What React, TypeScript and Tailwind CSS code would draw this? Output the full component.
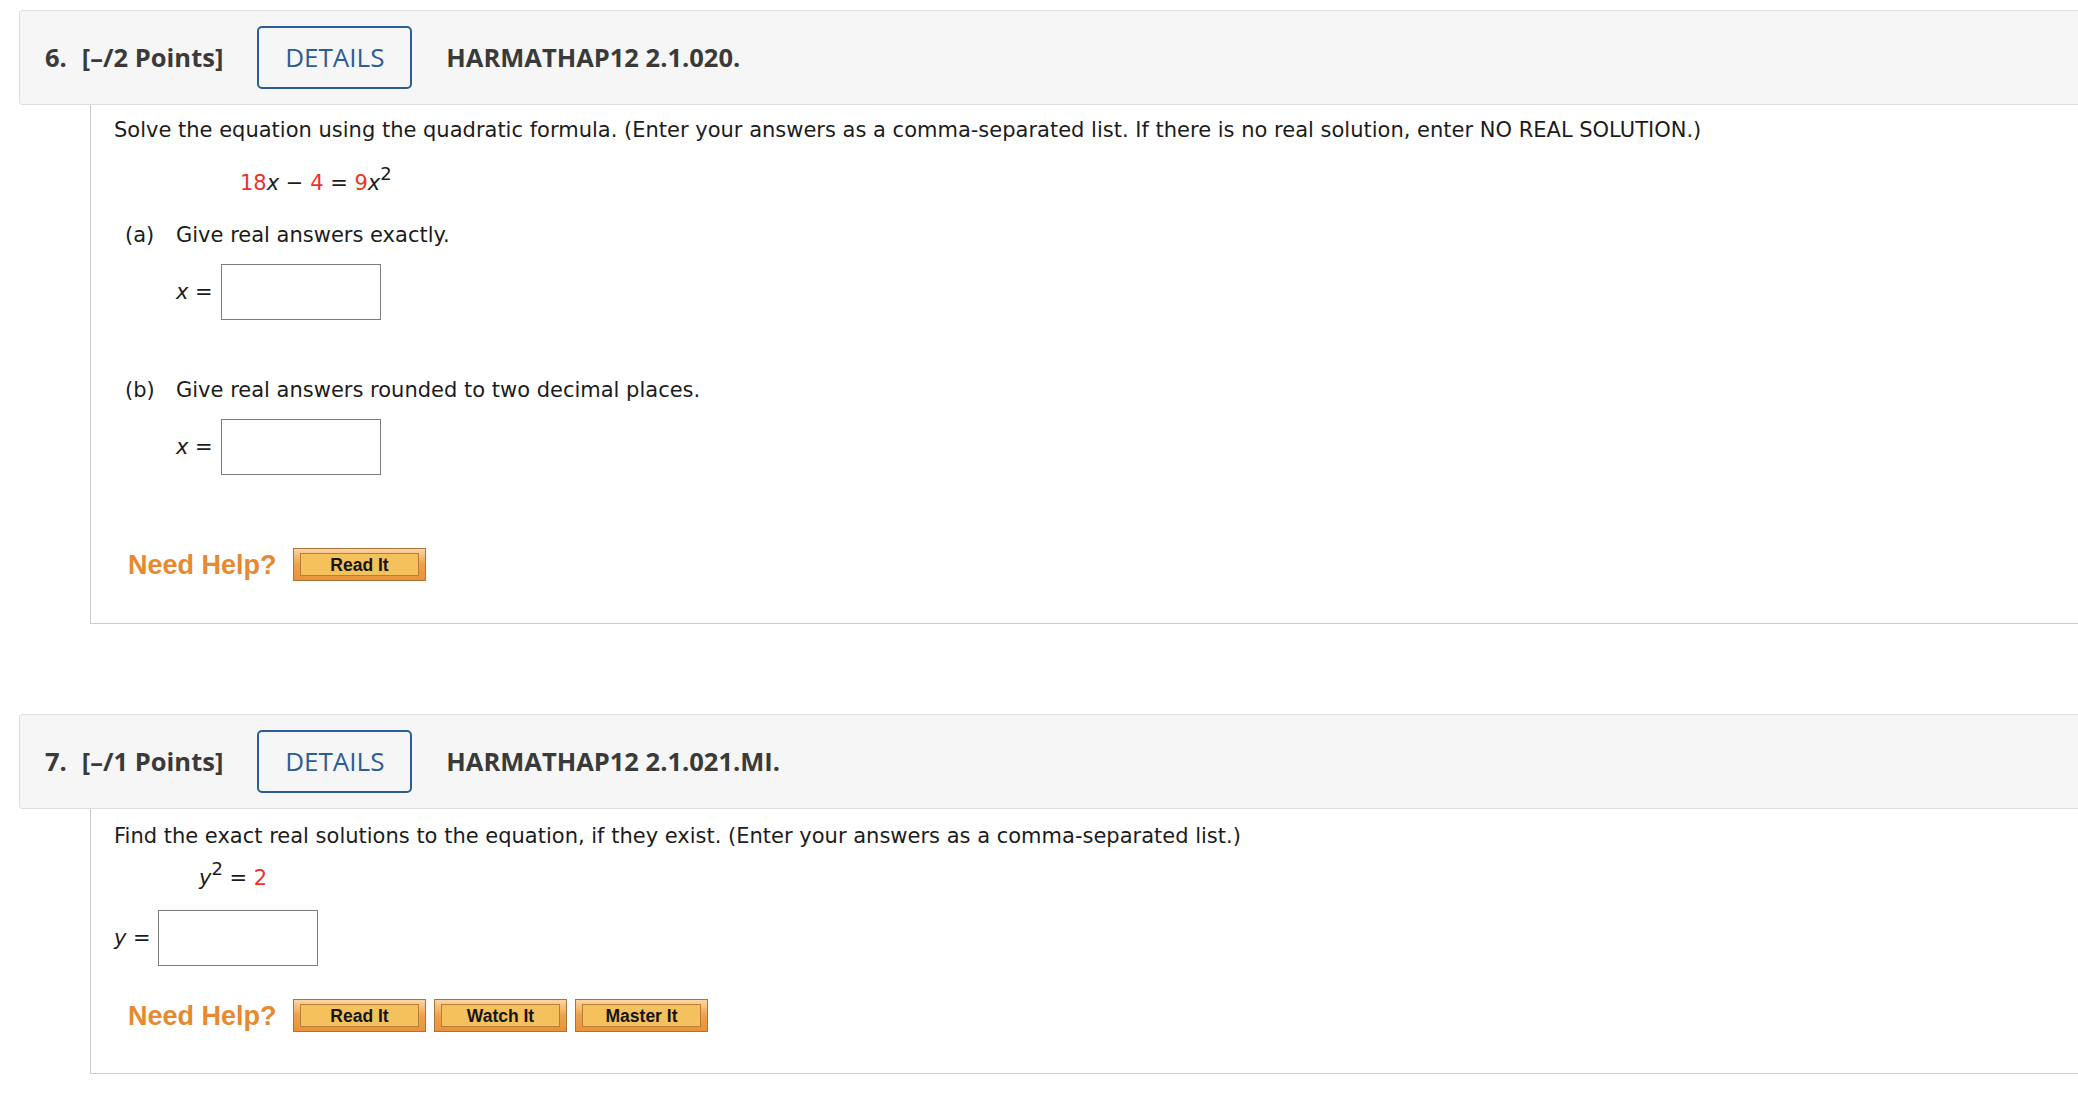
import React from 'react';

const body = 'font-["DejaVu_Sans",Verdana,sans-serif] text-[21px] leading-[24px] text-[#1c1c1c]';

function Header({ num, points, code }: { num: string; points: string; code: string }) {
  return (
    <div className='flex h-[95px] w-[2100px] items-center rounded-[3px] border border-[#dedede] bg-[#f6f6f6] pl-[25px] font-["Open_Sans",sans-serif] text-[25.5px] text-[#3a3a3a]'>
      <span className="font-bold">{num}</span>
      <span className="ml-[15px] font-bold">{points}</span>
      <button className="ml-[34px] flex h-[63px] w-[155px] items-center justify-center rounded-[5px] border-2 border-[#2c5d94] text-[26px] font-medium text-[#2c5d94]">
        DETAILS
      </button>
      <span className="ml-[34px] font-bold">{code}</span>
    </div>
  );
}

function HelpButton({ label }: { label: string }) {
  return (
    <div className="h-[33px] w-[133px] border border-[#ad7436] bg-gradient-to-b from-[#fbd6a2] via-[#eea14a] to-[#e8923a] px-[6px] py-[4px]">
      <div className='flex h-full w-full items-center justify-center border border-[#b97d35] bg-[#f4c15d] font-["Liberation_Sans",Arial,sans-serif] text-[17.5px] font-bold text-[#161616]'>
        {label}
      </div>
    </div>
  );
}

function NeedHelp({ buttons }: { buttons: string[] }) {
  return (
    <div className="flex items-center">
      <span className='ml-[14px] w-[165px] font-["Liberation_Sans",Arial,sans-serif] text-[27px] font-bold text-[#e6892f]'>
        Need Help?
      </span>
      <div className="flex gap-[8px]">
        {buttons.map((b) => (
          <HelpButton key={b} label={b} />
        ))}
      </div>
    </div>
  );
}

function AnswerBox() {
  return <div className="h-[56px] w-[160px] border border-[#7c7c7c] bg-white" />;
}

const Red = ({ children }: { children: React.ReactNode }) => <span className="text-[#ec3326]">{children}</span>;
const Sup = ({ children }: { children: React.ReactNode }) => (
  <sup className="top-[-10px] text-[18px]">{children}</sup>
);

export default function App() {
  return (
    <div className="relative h-[1114px] w-[2078px] overflow-hidden bg-white">
      <div className="ml-[19px] pt-[10px]">
        {/* question 6 */}
        <Header num="6." points="[–/2 Points]" code="HARMATHAP12 2.1.020." />
        <div className={`ml-[71px] w-[2100px] border-b border-l border-[#cccccc] pb-[42px] pl-[23px] pt-[13px] ${body}`}>
          <p>
            Solve the equation using the quadratic formula. (Enter your answers as a comma-separated list. If there is
            no real solution, enter NO REAL SOLUTION.)
          </p>
          <p className="ml-[126px] mt-[29px]">
            <Red>18</Red>
            <i>x</i> − <Red>4</Red> = <Red>9</Red>
            <i>x</i>
            <Sup>2</Sup>
          </p>
          <div className="ml-[11px] mt-[28px] flex">
            <span className="w-[51px]">(a)</span>
            <span>Give real answers exactly.</span>
          </div>
          <div className="ml-[62px] mt-[17px] flex items-center">
            <span className="w-[45px]">
              <i>x</i> =
            </span>
            <AnswerBox />
          </div>
          <div className="ml-[11px] mt-[58px] flex">
            <span className="w-[51px]">(b)</span>
            <span>Give real answers rounded to two decimal places.</span>
          </div>
          <div className="ml-[62px] mt-[17px] flex items-center">
            <span className="w-[45px]">
              <i>x</i> =
            </span>
            <AnswerBox />
          </div>
          <div className="mt-[73px]">
            <NeedHelp buttons={['Read It']} />
          </div>
        </div>

        {/* question 7 */}
        <div className="mt-[90px]">
          <Header num="7." points="[–/1 Points]" code="HARMATHAP12 2.1.021.MI." />
        </div>
        <div className={`ml-[71px] w-[2100px] border-b border-l border-[#cccccc] pb-[41px] pl-[23px] pt-[15px] ${body}`}>
          <p>
            Find the exact real solutions to the equation, if they exist. (Enter your answers as a comma-separated list.)
          </p>
          <p className="ml-[85px] mt-[18px]">
            <i>y</i>
            <Sup>2</Sup> = <Red>2</Red>
          </p>
          <div className="mt-[20px] flex items-center">
            <span className="w-[44px]">
              <i>y</i> =
            </span>
            <AnswerBox />
          </div>
          <div className="mt-[33px]">
            <NeedHelp buttons={['Read It', 'Watch It', 'Master It']} />
          </div>
        </div>
      </div>
    </div>
  );
}
